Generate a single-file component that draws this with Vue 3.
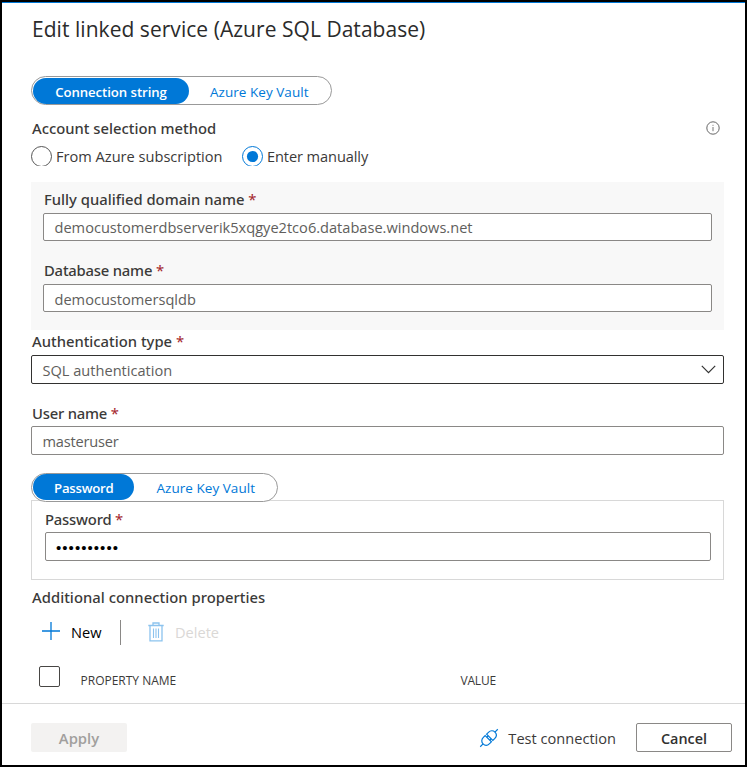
<script setup>
import { ref } from 'vue'

const method = ref('manual')
</script>

<template>
  <main class="panel">
    <h1 class="title">Edit linked service (Azure SQL Database)</h1>

    <section class="content">
      <div class="pill source">
        <button class="tab active wide">Connection string</button>
        <button class="tab">Azure Key Vault</button>
      </div>

      <div class="label-row">
        <span class="label">Account selection method</span>
        <svg class="info" viewBox="0 0 14 14" width="14" height="14">
          <circle cx="7" cy="7" r="6.2" fill="none" stroke="#555" stroke-width="0.9" />
          <path d="M7 6v4.2M7 3.8v1" stroke="#777" stroke-width="1" />
        </svg>
      </div>

      <div class="radios">
        <span class="radio" @click="method = 'subscription'">
          <svg viewBox="0 0 21 20" width="21" height="20">
            <circle cx="10.5" cy="10.5" r="10" fill="#fff" stroke="#555" />
            <circle v-if="method === 'subscription'" cx="10.5" cy="10.5" r="5.5" fill="#0078d7" />
          </svg>
          <span class="from">From Azure subscription</span>
        </span>
        <span class="radio" @click="method = 'manual'">
          <svg viewBox="0 0 21 20" width="21" height="20">
            <circle cx="10.5" cy="10.5" r="10" fill="#fff" stroke="#0078d7" />
            <circle v-if="method === 'manual'" cx="10.5" cy="10.5" r="5.6" fill="#0078d7" />
          </svg>
          <span class="enter">Enter manually</span>
        </span>
      </div>

      <div class="server">
        <div class="label">Fully qualified domain name <i>*</i></div>
        <div class="field domain">democustomerdbserverik5xqgye2tco6.database.windows.net</div>
        <div class="label tight">Database name <i>*</i></div>
        <div class="field database">democustomersqldb</div>
      </div>

      <div class="label auth">Authentication type <i>*</i></div>
      <div class="field tall select">
        <span>SQL authentication</span>
        <svg viewBox="0 0 15 9" width="15" height="9">
          <path d="M0.8 0.8L7.5 7.6L14.2 0.8" fill="none" stroke="#333" stroke-width="1.2" />
        </svg>
      </div>

      <div class="label user tight">User name <i>*</i></div>
      <div class="field tall login">masteruser</div>

      <div class="pill secret">
        <button class="tab active short">Password</button>
        <button class="tab vault">Azure Key Vault</button>
      </div>
      <div class="secret-box">
        <div class="label inset tight">Password <i>*</i></div>
        <div class="field tall dots">••••••••••</div>
      </div>

      <div class="label extra">Additional connection properties</div>
      <div class="toolbar">
        <svg viewBox="0 0 18 18" width="18" height="18">
          <path d="M9 0v18M0 9h18" stroke="#0078d7" stroke-width="1.3" />
        </svg>
        <span class="new">New</span>
        <span class="divider"></span>
        <svg class="trash" viewBox="0 0 16 20" width="16" height="20">
          <g fill="none" stroke="#8cc3ee" stroke-width="1.3">
            <path d="M0.3 3.5h15.4M5 3.2V1h6v2.2M2 3.8V18.8h12V3.8" />
            <path d="M5.5 6.5v9.5M8 6.5v9.5M10.5 6.5v9.5" stroke-width="1.1" />
          </g>
        </svg>
        <span class="delete">Delete</span>
      </div>
      <div class="columns">
        <span class="checkbox"></span>
        <span class="name">PROPERTY NAME</span>
        <span class="value">VALUE</span>
      </div>
    </section>

    <footer class="footer">
      <button class="button apply">Apply</button>
      <div class="test">
        <svg viewBox="0 0 20 20" width="20" height="20">
          <g transform="rotate(-45 10 10)" fill="none" stroke="#0078d7" stroke-width="1.2">
            <path d="M-2.4 10H1.6M18.4 10h4" />
            <path d="M9 5.6v8.8H6.4C3.4 14.4 1.6 12.4 1.6 10S3.4 5.6 6.4 5.6z" />
            <path d="M11 5.6v8.8h2.6c3 0 4.8-2 4.8-4.4s-1.8-4.4-4.8-4.4z" />
            <path d="M9 8h2M9 12h2" />
          </g>
        </svg>
        <span>Test connection</span>
      </div>
      <button class="button cancel">Cancel</button>
    </footer>
  </main>
</template>

<style>
body {
  background: #fff;
}
</style>

<style scoped>
* {
  box-sizing: border-box;
}
.panel {
  display: flex;
  flex-direction: column;
  height: 767px;
  border: 2px solid #000;
  background: #fff;
  box-shadow: inset 0 1px #0078d7;
  font: 14.6px/20px "Open Sans", "Noto Sans", sans-serif;
  color: #3b3a39;
  white-space: nowrap;
}
.title {
  margin: 13px 0 0 30px;
  height: 28px;
  font-size: 21px;
  line-height: 28px;
  font-weight: 400;
  letter-spacing: 0.04px;
  color: #2b2b2b;
}
.content {
  height: 660px;
  padding: 33px 21px 0 29px;
}
button {
  margin: 0;
  border: 0;
  background: none;
  font-family: inherit;
  white-space: nowrap;
}
.pill {
  display: flex;
  height: 29px;
  border: 1px solid #999;
  border-radius: 15px;
  background: #fff;
}
.source {
  width: 301px;
  padding: 1px;
}
.secret {
  position: relative;
  width: 247px;
  margin-top: 18px;
  padding: 0 1px 1px;
}
.tab {
  height: 26px;
  padding: 2px 21px 0;
  font-size: 13.5px;
  line-height: 24px;
  letter-spacing: 0.04px;
  color: #0078d7;
}
.tab.active {
  border-radius: 13px;
  background: #0078d7;
  color: #fff;
  font-weight: 600;
  font-size: 13.2px;
  letter-spacing: -0.06px;
}
.wide {
  width: 156px;
}
.tab.wide {
  padding: 2px 20px 0;
}
.short {
  width: 102px;
}
.tab.short {
  letter-spacing: -0.25px;
}
.tab.vault {
  padding-left: 22px;
}
.label {
  height: 20px;
  padding-left: 1px;
  font-family: "Noto Sans", sans-serif;
  font-weight: 500;
  font-size: 14.8px;
}
.tight {
  letter-spacing: -0.2px;
}
.inset {
  padding-left: 0;
}
.label i {
  font-style: normal;
  font-weight: 400;
  color: #a4262c;
}
.label-row {
  display: flex;
  justify-content: space-between;
  align-items: center;
  height: 20px;
  margin-top: 13px;
  padding-right: 4px;
}
.radios {
  display: flex;
  height: 20px;
  margin-top: 8px;
}
.radio {
  display: flex;
  gap: 4px;
}
.radio:first-child {
  width: 211px;
}
.enter {
  letter-spacing: -0.1px;
}
.server {
  height: 148px;
  margin-top: 16px;
  padding: 7px 12px 0;
  background: #f8f8f8;
}
.field {
  height: 28px;
  padding: 0 10.5px;
  border: 1px solid #8a8886;
  border-radius: 2px;
  background: #fff;
  line-height: 27px;
  color: #605e5c;
}
.server .field {
  margin-top: 4px;
}
.server .field + .label {
  margin-top: 19px;
}
.server .database {
  padding-top: 1px;
}
.tall {
  height: 29px;
  line-height: 29px;
}
.auth {
  margin-top: 1px;
}
.select {
  display: flex;
  justify-content: space-between;
  align-items: center;
  margin-top: 4px;
  padding-right: 7px;
  border-color: #323130;
}
.select span {
  padding-top: 2px;
}
.user {
  margin-top: 19px;
}
.login {
  margin-top: 3px;
  letter-spacing: -0.2px;
}
.secret-box {
  height: 80px;
  margin-top: -2px;
  padding: 8px 12px 0 13px;
  border: 1px solid #d8d8d8;
}
.dots {
  margin-top: 3px;
  padding-left: 10px;
  font-family: "Liberation Sans", sans-serif;
  font-size: 15px;
  letter-spacing: 1.05px;
  color: #000;
}
.extra {
  margin-top: 7px;
  letter-spacing: 0.03px;
}
.toolbar {
  display: flex;
  height: 25px;
  margin-top: 13px;
  padding-left: 11px;
}
.toolbar svg {
  margin-top: 2px;
}
.new {
  width: 49px;
  margin: 2px 0 0 11px;
  color: #000;
}
.divider {
  width: 1px;
  height: 25px;
  margin-right: 27px;
  background: #8a8886;
}
.delete {
  margin: 2px 0 0 11px;
  color: #dad8d6;
}
.columns {
  display: flex;
  height: 21px;
  margin-top: 21px;
  padding-left: 8px;
  font-size: 12px;
}
.checkbox {
  width: 21px;
  height: 21px;
  border: 1px solid #484644;
  border-radius: 2px;
}
.name {
  width: 380px;
  margin-left: 20.5px;
  padding-top: 5px;
}
.value {
  padding-top: 5px;
  letter-spacing: -0.2px;
}
.footer {
  display: flex;
  flex: 1;
  padding: 19px 13px 0 29px;
  border-top: 1px solid #d8d8d8;
}
.button {
  width: 96px;
  height: 29px;
  padding: 2px 0 0;
  border-radius: 2px;
  font-size: 14.8px;
  font-weight: 600;
  line-height: 27px;
}
.apply {
  background: #f3f2f1;
  color: #a19f9d;
}
.test {
  display: flex;
  gap: 9px;
  margin: 5px 20px 0 auto;
}
.cancel {
  padding: 1px 0 0;
  border: 1px solid #8a8886;
  font-size: 14.4px;
  color: #323130;
}
</style>
